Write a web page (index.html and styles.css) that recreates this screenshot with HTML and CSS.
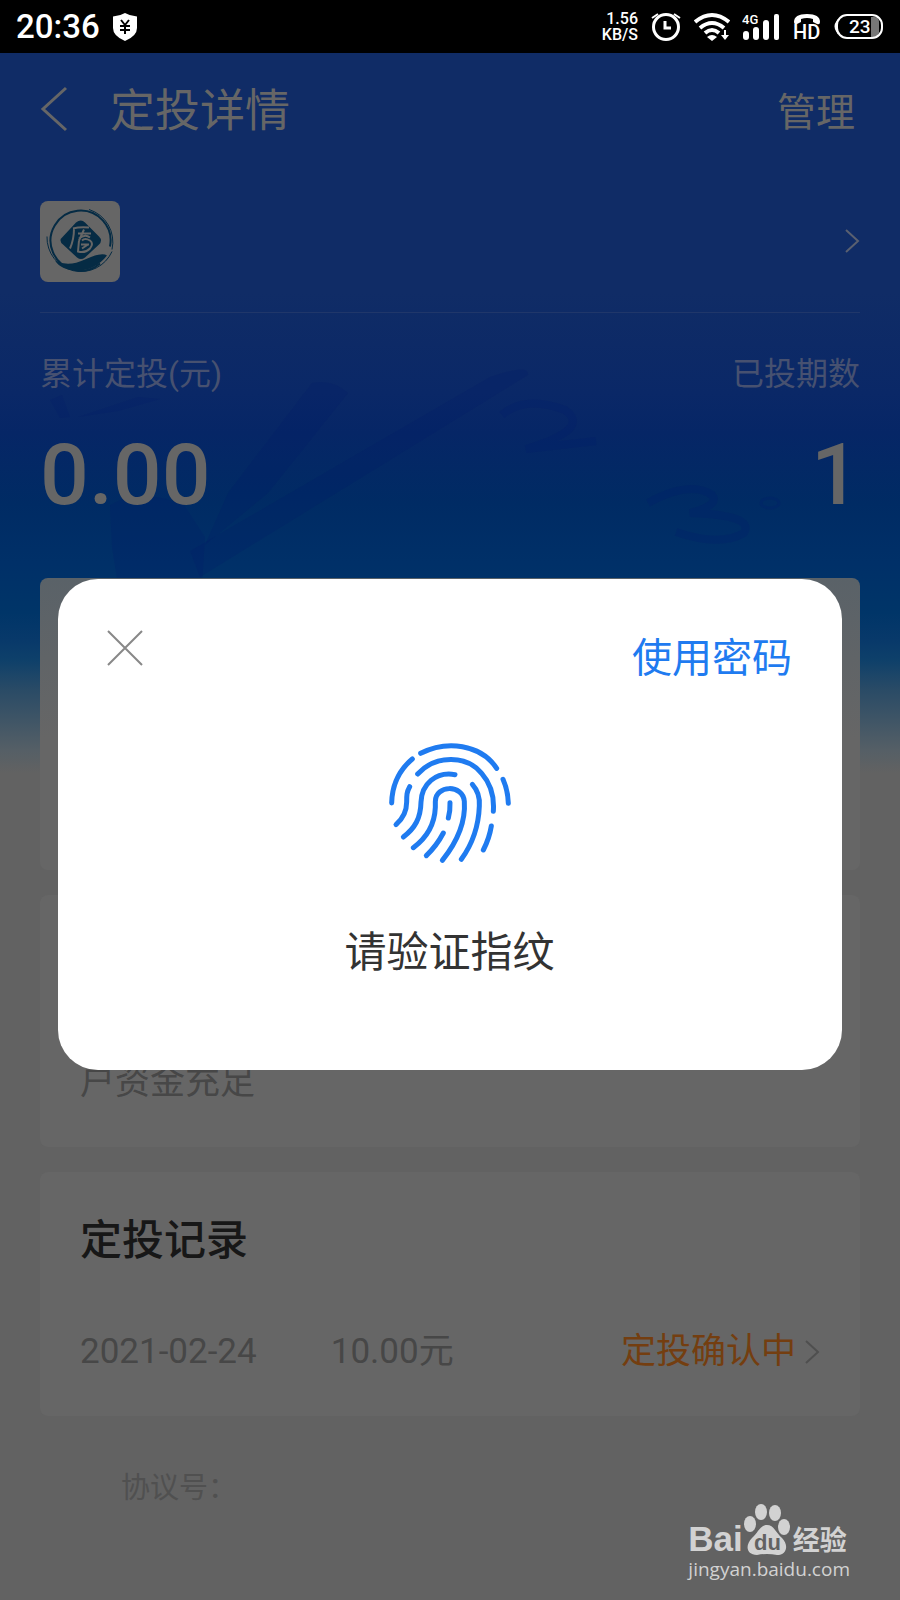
FILE: index.html
```html
<!DOCTYPE html>
<html lang="zh-CN">
<head>
<meta charset="utf-8">
<meta name="viewport" content="width=device-width, initial-scale=1">
<title>定投详情</title>
<link rel="stylesheet" href="styles.css">
</head>
<body>
<div class="status-bar">
  <div class="status-group">
    <span class="clock">20:36</span>
    <svg class="shield" width="26" height="28" viewBox="0 0 26 28" aria-hidden="true">
      <path d="M13 0Q18 3 25 3.500V15Q25 23 13 28Q1 23 1 15V3.500Q8 3 13 0Z" fill="#fff"/>
      <path d="M9 7l4 5 4-5M8 13h10M8 17h10M13 12v9" fill="none" stroke="#000" stroke-width="2"/>
    </svg>
  </div>
  <div class="status-group status-right">
    <div class="speed"><span>1.56</span><span>KB/S</span></div>
    <svg width="32" height="30" viewBox="0 0 32 30" fill="none" stroke="#fff" aria-hidden="true">
      <circle cx="16" cy="15" r="12.500" stroke-width="3"/><path d="M15 9v7h6" stroke-width="3"/><path d="M2 6l6-4M30 6l-6-4" stroke-width="2"/>
    </svg>
    <svg width="36" height="30" viewBox="0 0 36 30" fill="none" stroke="#fff" stroke-width="4" aria-hidden="true">
      <path d="M1 10Q18-4 35 10M6 16Q18 6 30 16M11 21Q18 15 25 21"/><path d="M13 25q5-4 10 0l-5 4z" fill="#fff" stroke="none"/><path d="M31 18v8" stroke-width="2"/><path d="M27 23h8l-4 5z" fill="#fff" stroke="none"/>
    </svg>
    <svg width="38" height="30" viewBox="0 0 38 30" aria-hidden="true">
      <g fill="#fff"><rect x="1" y="19" width="6" height="9" rx="3"/><rect x="11" y="15" width="6" height="13" rx="3"/><rect x="21" y="8" width="6" height="20" rx="3"/><rect x="32" y="2" width="5" height="26" rx="2"/></g>
      <text class="network" x="0" y="12">4G</text>
    </svg>
    <svg width="30" height="32" viewBox="0 0 30 32" aria-hidden="true">
      <path d="M2 11Q2 3 15 3T28 11Q28 14 25 13L21 11V8Q15 6 9 8V11L5 13Q2 14 2 11Z" fill="#fff"/>
      <text class="hd" x="1" y="28">HD</text>
    </svg>
    <svg width="50" height="30" viewBox="0 0 50 30" aria-hidden="true">
      <path d="M37 5h3q5 0 5 5v10q0 5-5 5h-3z" fill="#777"/>
      <rect x="3" y="3" width="45" height="23" rx="10" fill="none" stroke="#fff" stroke-width="2"/>
      <path d="M3 10Q0 14 3 19z" fill="#fff" stroke="#fff" stroke-width="2"/>
      <text class="battery" x="15" y="21">23</text>
    </svg>
  </div>
</div>

<main class="page">
  <section class="hero">
    <svg class="hero-art" viewBox="0 0 900 300" preserveAspectRatio="xMidYMin slice" aria-hidden="true">
      <g fill="#00196a" fill-opacity=".2">
        <path d="M228 168L312 58Q332 54 348 68L268 168L205 220Z"/>
        <path d="M190 226L490 52Q530 38 528 50L200 252Z"/>
        <path d="M110 180Q140 162 184 180L205 212L202 260H118L112 222Z"/>
        <path d="M50 75l12-5 8 22-10 1zM78 92l60-20 22 2-42 12z"/>
      </g>
      <g fill="none" stroke="#001d6c" stroke-opacity=".25" stroke-width="8">
        <path d="M502 90Q525 70 565 85Q592 104 526 124L596 116"/>
        <path d="M648 178Q690 155 712 170Q720 180 690 188Q755 190 744 208Q720 222 676 207"/>
        <ellipse cx="770" cy="178" rx="9" ry="5" stroke-width="3"/>
      </g>
    </svg>
    <header class="nav">
      <button class="back" aria-label="返回"><svg width="28" height="46" viewBox="0 0 28 46"><path d="M26 2L3 23L26 44" fill="none" stroke="#666" stroke-width="3"/></svg></button>
      <h1>定投详情</h1>
      <button class="manage">管理</button>
    </header>
    <a class="fund" href="#fund" aria-label="基金详情">
      <svg class="fund-logo" width="80" height="81" viewBox="0 0 80 80">
        <g fill="none" stroke="#052b44">
          <path d="M70 45A30 30 0 1 0 60 62" stroke-width="2"/>
          <path d="M49 8A34 34 0 0 1 72 48M7 35A34 34 0 0 0 72 50" stroke-width="1"/>
        </g>
        <path d="M15 59Q28 66 45 58T67 54Q55 69 38 69T15 59ZM36 21Q41 17 45 21L59 35Q63 39 59 43L45 56Q41 59 37 56L23 43Q18 39 23 35Z" fill="#052b44"/>
        <path d="M33 27Q40 25 49 26M34 27Q34 38 30 47M38 32h13M44 28l-5 11M39 37q6-5 11-1M39 39l-1 11q7 2 12-3 4-5 0-8-5-3-8 0M41 43h8M42 47l6-4" fill="none" stroke="#666" stroke-width="2"/>
      </svg>
      <svg width="16" height="26" viewBox="0 0 16 26"><path d="M2 2L14 13L2 24" fill="none" stroke="#5a6070" stroke-width="2"/></svg>
    </a>
    <dl class="stats">
      <div><dt>累计定投(元)</dt><dd>0.00</dd></div>
      <div class="stat-end"><dt>已投期数</dt><dd>1</dd></div>
    </dl>
  </section>

  <div class="cards">
    <section class="card card-chart"></section>
    <section class="card card-notice"><p>户资金充足</p></section>
    <section class="card card-record">
      <h2>定投记录</h2>
      <a class="record" href="#record">
        <span class="date">2021-02-24</span>
        <span class="amount">10.00元</span>
        <span class="state">定投确认中</span>
        <svg width="16" height="26" viewBox="0 0 16 26" aria-hidden="true"><path d="M2 2L14 13L2 24" fill="none" stroke="#4f4f4f" stroke-width="2"/></svg>
      </a>
    </section>
  </div>
  <footer class="footer">
    <p>协议号：</p>
    <div class="watermark">
      <div class="brand"><span class="bai">Bai</span>
        <svg width="48" height="52" viewBox="0 0 48 52" aria-hidden="true">
          <g fill="#d2d2d2"><ellipse cx="7" cy="20" rx="6" ry="8"/><ellipse cx="18" cy="8" rx="6" ry="8"/><ellipse cx="32" cy="9" rx="6" ry="8"/><ellipse cx="41" cy="23" rx="6" ry="8"/><path d="M24 21C31 21 33 29 39 34C46 41 44 51 34 51Q24 49 14 51C3 51 2 41 9 34C15 29 17 21 24 21Z"/></g>
          <text class="du" x="11" y="46">du</text>
        </svg>
        <span class="jingyan">经验</span></div>
      <div class="site">jingyan.baidu.com</div>
    </div>
  </footer>
</main>

<div class="overlay">
  <div class="dialog" role="dialog" aria-modal="true" aria-labelledby="dialog-title">
    <div class="dialog-bar">
      <button class="close" aria-label="关闭"><svg width="36" height="36" viewBox="0 0 36 36"><path d="M1 1L35 35M35 1L1 35" fill="none" stroke="#888" stroke-width="2"/></svg></button>
      <button class="password">使用密码</button>
    </div>
    <svg class="fingerprint" width="124" height="124" viewBox="0 0 372 372" aria-hidden="true">
      <g transform="translate(-84 -64)" fill="none" stroke="#1f7bf0" stroke-width="15" stroke-linecap="round" stroke-linejoin="round">
        <path d="M182 101C260 61 362 73 410 146"/>
        <path d="M429 179Q444 213 445 251"/>
        <path d="M157 118Q97 168 95 250"/>
        <path d="M173 163C228 103 321 107 365 161Q405 207 400 275"/>
        <path d="M394 319Q388 356 370 391"/>
        <path d="M149 201C140 217 140 227 140 247Q140 287 108 315"/>
        <path d="M285 165C227 155 185 194 183 247C182 296 165 325 130 352"/>
        <path d="M337 194C354 213 360 233 358 259Q355 348 304 419"/>
        <path d="M160 384Q223 337 226 263V246C226 195 309 193 313 245Q319 332 247 422"/>
        <path d="M270 249Q271 274 265 295"/>
        <path d="M250 340Q230 378 199 408"/>
      </g>
    </svg>
    <p class="prompt" id="dialog-title">请验证指纹</p>
  </div>
</div>
</body>
</html>
```

FILE: styles.css
```css
* { box-sizing: border-box; }
body {
  margin: 0;
  min-height: 100vh;
  background: #626262;
  color: #666;
  font-family: Roboto, "Noto Sans CJK SC", sans-serif;
}
h1, h2, p, dl, dd { margin: 0; font-weight: 400; }
button { border: 0; padding: 0; background: none; color: inherit; font: inherit; cursor: pointer; }
a { color: inherit; text-decoration: none; }
svg { display: block; flex: none; }

.status-bar {
  display: flex;
  justify-content: space-between;
  align-items: center;
  height: 53px;
  padding: 0 16px;
  background: #000;
  color: #fff;
}
.status-group { display: flex; align-items: center; gap: 12px; }
.clock { font-size: 33px; font-weight: 500; }
.speed { display: grid; font-size: 16px; line-height: 16px; font-weight: 500; text-align: right; }
.network { fill: #fff; font-size: 13px; font-weight: 500; }
.hd { fill: #fff; font-size: 20px; font-weight: 500; }
.battery { fill: #fff; font-size: 19px; font-weight: 500; }

.page {
  background: linear-gradient(#102c66 0, #102c66 240px, #0a2867 340px, #062666 380px, #002b64 450px, #003068 510px, #003568 560px, #08396a 587px, #0e406a 607px, #2a4b66 637px, #3f5566 667px, #555f66 697px, #626262 720px);
}
.hero { position: relative; height: 525px; padding: 0 40px; }
.hero-art { position: absolute; top: 272px; left: 0; width: 100%; height: 253px; }
.nav { display: flex; align-items: center; height: 112px; }
.back { margin-right: 42px; }
.nav h1 { flex: 1; padding-bottom: 3px; font-size: 45px; }
.manage { padding-right: 5px; font-size: 39px; }
.fund {
  display: flex;
  align-items: center;
  justify-content: space-between;
  height: 148px;
  padding-top: 5px;
  border-bottom: 1px solid #20376a;
}
.fund-logo { border-radius: 8px; background: #666; }
.stats { position: relative; display: flex; justify-content: space-between; padding-top: 37px; }
.stats dt { color: #475170; font-size: 32px; line-height: 48px; }
.stats dd {
  margin-top: 25px;
  font-size: 86px;
  line-height: 104px;
  font-weight: 500;
}
.stat-end { text-align: right; }

.cards { display: grid; gap: 25px; padding: 0 40px; }
.card { padding: 40px; border-radius: 8px; background: #666; }
.card-chart { min-height: 292px; background: linear-gradient(#5a6268, #666 160px); }
.card-notice { display: flex; align-items: flex-end; min-height: 252px; padding-bottom: 38px; color: #474747; font-size: 35px; line-height: 52px; }
.card-record { min-height: 244px; padding-bottom: 38px; padding-top: 43px; }
.card-record h2 { color: #171717; font-size: 42px; line-height: 52px; font-weight: 500; }
.record { display: flex; align-items: center; margin-top: 59px; color: #474747; font-size: 35px; line-height: 52px; }
.amount { flex: 1; margin-left: 74px; }
.state { margin-right: 8px; color: #743e10; }

.footer { display: flex; justify-content: space-between; padding: 48px 50px 0 121px; }
.footer p { color: #505050; font-size: 29px; line-height: 48px; }
.watermark { margin-top: 40px; color: #d2d2d2; }
.brand { display: flex; align-items: flex-end; height: 52px; }
.bai { font-family: "Liberation Sans", sans-serif; font-size: 35px; line-height: 34px; font-weight: 700; }
.du { fill: #626262; font-family: "Liberation Sans", sans-serif; font-size: 22px; font-weight: 700; }
.jingyan { margin-left: 2px; font-size: 27px; line-height: 30px; font-weight: 700; }
.site { font-family: "Open Sans", sans-serif; font-size: 19px; line-height: 26px; }

.overlay {
  position: absolute;
  inset: 579px 0 auto;
  padding: 0 58px;
}
.dialog {
  display: flex;
  flex-direction: column;
  align-items: center;
  min-height: 491px;
  padding: 50px 50px 48px 49px;
  border-radius: 40px;
  background: #fff;
}
.dialog-bar { display: flex; justify-content: space-between; align-items: center; width: 100%; }
.close { margin-bottom: 22px; }
.password { color: #1f7bf0; font-size: 40px; line-height: 60px; }
.fingerprint { margin-top: 52px; }
.prompt { margin-top: 58px; color: #333; font-size: 42px; line-height: 60px; }
```
